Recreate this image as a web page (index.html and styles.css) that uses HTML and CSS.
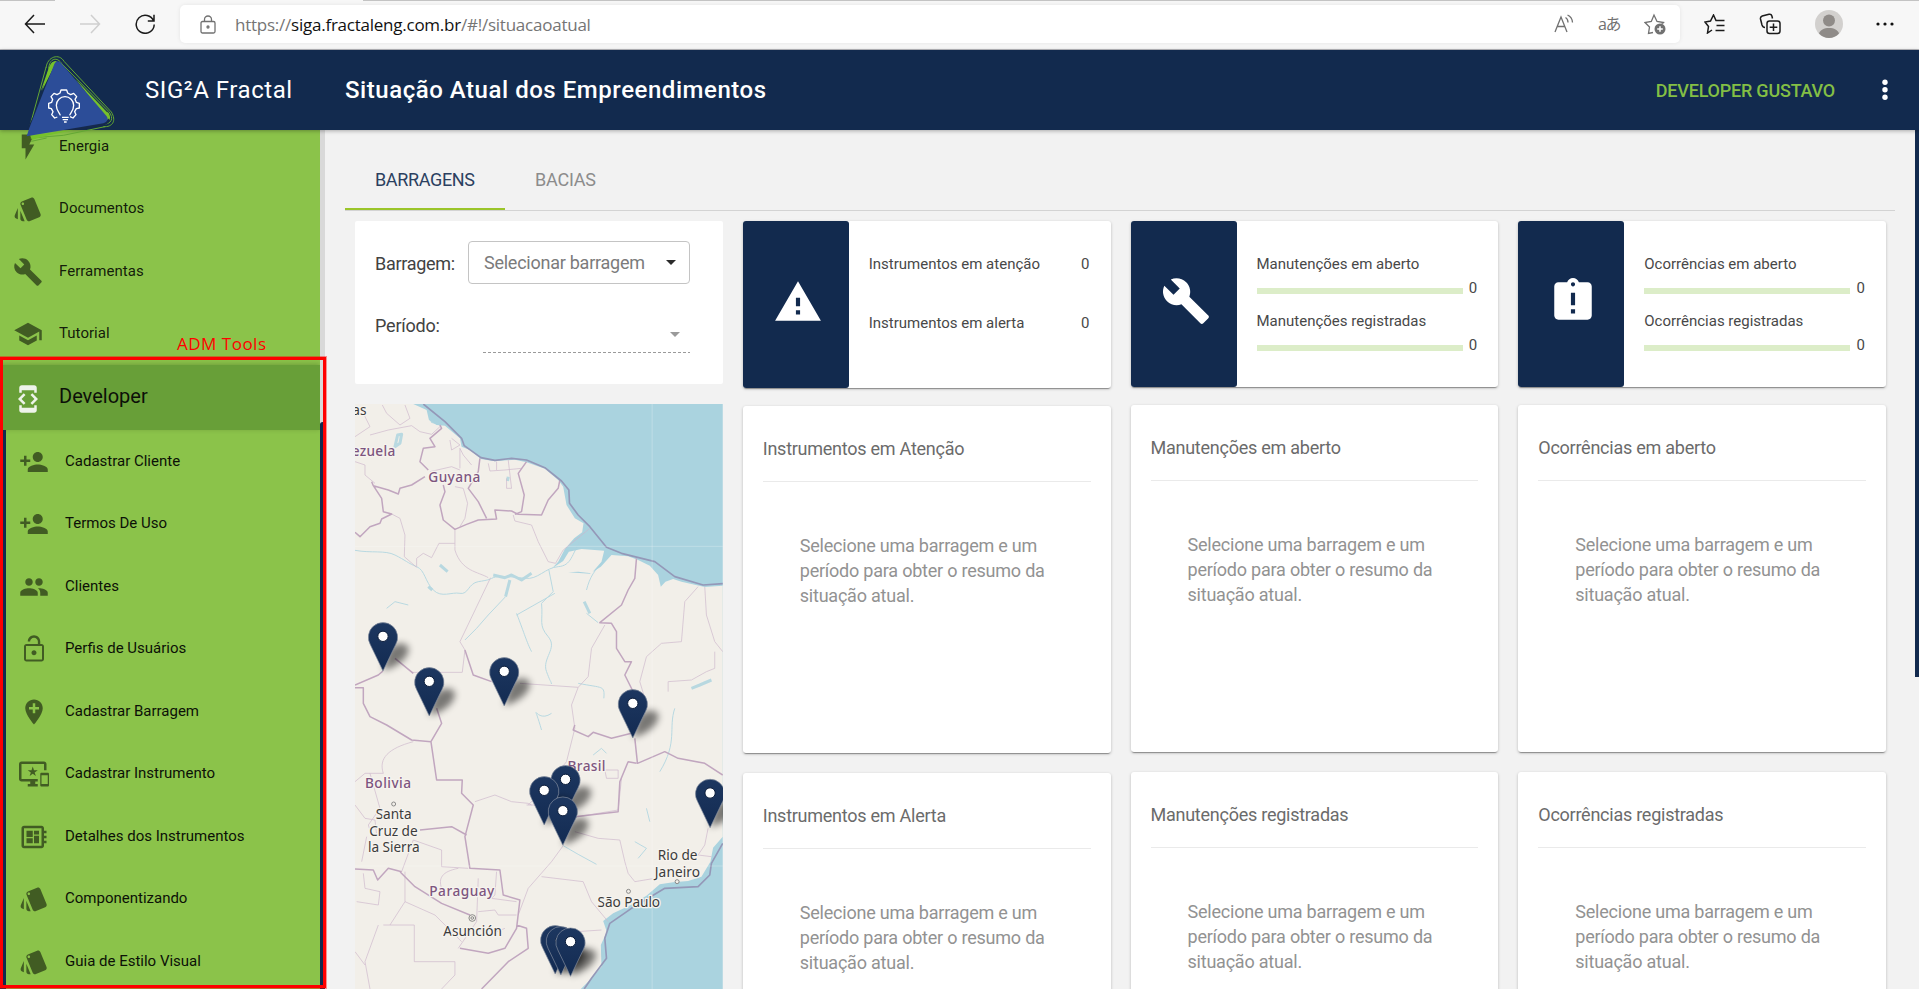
FILE: index.html
```html
<!DOCTYPE html>
<html lang="pt-BR">
<head>
<meta charset="utf-8">
<title>SIG²A Fractal</title>
<link rel="stylesheet" href="styles.css">
</head>
<body>
<svg class="defs" width="0" height="0" aria-hidden="true">
  <symbol id="i-flash" viewBox="0 0 24 24"><path d="M7 2v11h3v9l7-12h-4l4-8z"/></symbol>
  <symbol id="i-style" viewBox="0 0 24 24"><path d="M2.53 19.65l1.34.56v-9.03l-2.43 5.86c-.41 1.02.08 2.19 1.09 2.61zm19.5-3.7L17.07 3.98c-.31-.75-1.04-1.21-1.81-1.23-.26 0-.53.04-.79.15L7.1 5.95c-.75.31-1.21 1.03-1.23 1.8-.01.27.04.54.15.8l4.96 11.97c.31.76 1.05 1.22 1.83 1.23.26 0 .52-.05.77-.15l7.36-3.05c1.02-.42 1.51-1.59 1.09-2.6zM7.88 8.75c-.55 0-1-.45-1-1s.45-1 1-1 1 .45 1 1-.45 1-1 1zm-2 11c0 1.1.9 2 2 2h1.45l-3.45-8.34v6.34z"/></symbol>
  <symbol id="i-build" viewBox="0 0 24 24"><path d="M22.7 19l-9.1-9.1c.9-2.3.4-5-1.5-6.9-2-2-5-2.4-7.4-1.3L9 6 6 9 1.6 4.7C.4 7.1.9 10.1 2.9 12.1c1.9 1.9 4.6 2.4 6.9 1.5l9.1 9.1c.4.4 1 .4 1.4 0l2.3-2.3c.5-.4.5-1.1.1-1.4z"/></symbol>
  <symbol id="i-school" viewBox="0 0 24 24"><path d="M5 13.18v4L12 21l7-3.82v-4L12 17l-7-3.82zM12 3L1 9l11 6 9-4.91V17h2V9L12 3z"/></symbol>
  <symbol id="i-dev" viewBox="0 0 24 24"><path d="M7 5h10v2h2V3c0-1.1-.9-1.99-2-1.99L7 1c-1.1 0-2 .9-2 2v4h2V5zm8.41 11.59L20 12l-4.59-4.59L14 8.83 17.17 12 14 15.17l1.41 1.42zM10 15.17L6.83 12 10 8.83 8.59 7.41 4 12l4.59 4.59L10 15.17zM17 19H7v-2H5v4c0 1.1.9 2 2 2h10c1.1 0 2-.9 2-2v-4h-2v2z"/></symbol>
  <symbol id="i-person-add" viewBox="0 0 24 24"><path d="M15 12c2.21 0 4-1.79 4-4s-1.79-4-4-4-4 1.79-4 4 1.79 4 4 4zm-9-2V7H4v3H1v2h3v3h2v-3h3v-2H6zm9 4c-2.67 0-8 1.34-8 4v2h16v-2c0-2.66-5.33-4-8-4z"/></symbol>
  <symbol id="i-people" viewBox="0 0 24 24"><path d="M16 11c1.66 0 2.99-1.34 2.99-3S17.66 5 16 5c-1.66 0-3 1.34-3 3s1.34 3 3 3zm-8 0c1.66 0 2.99-1.34 2.99-3S9.66 5 8 5C6.34 5 5 6.34 5 8s1.34 3 3 3zm0 2c-2.33 0-7 1.17-7 3.5V19h14v-2.5c0-2.33-4.67-3.5-7-3.5zm8 0c-.29 0-.62.02-.97.05 1.16.84 1.97 1.97 1.97 3.45V19h6v-2.5c0-2.33-4.67-3.5-7-3.5z"/></symbol>
  <symbol id="i-lock-open" viewBox="0 0 24 24"><path d="M12 17c1.1 0 2-.9 2-2s-.9-2-2-2-2 .9-2 2 .9 2 2 2zm6-9h-1V6c0-2.76-2.24-5-5-5S7 3.24 7 6h1.9c0-1.71 1.39-3.1 3.1-3.1 1.71 0 3.1 1.39 3.1 3.1v2H6c-1.1 0-2 .9-2 2v10c0 1.1.9 2 2 2h12c1.1 0 2-.9 2-2V10c0-1.1-.9-2-2-2zm.4 12.4H5.6V9.6h12.8v10.8z"/></symbol>
  <symbol id="i-add-location" viewBox="0 0 24 24"><path d="M12 2C8.14 2 5 5.14 5 9c0 5.25 7 13 7 13s7-7.75 7-13c0-3.86-3.14-7-7-7zm4 8h-3v3h-2v-3H8V8h3V5h2v3h3v2z"/></symbol>
  <symbol id="i-devices" viewBox="0 0 24 24"><path d="M23 11.01L18 11c-.55 0-1 .45-1 1v9c0 .55.45 1 1 1h5c.55 0 1-.45 1-1v-9c0-.55-.45-.99-1-.99zM23 20h-5v-7h5v7zM20 2H2C.89 2 0 2.89 0 4v12c0 1.1.89 2 2 2h7v2H7v2h8v-2h-2v-2h2v-2H2V4h18v5h2V4c0-1.11-.9-2-2-2zm-8.03 7L11 6l-.97 3H7l2.47 1.76-.94 2.91 2.47-1.8 2.47 1.8-.94-2.91L15 9h-3.03z"/></symbol>
  <symbol id="i-board" viewBox="0 0 24 24"><path d="M22 9V7h-2V5c0-1.1-.9-2-2-2H4c-1.1 0-2 .9-2 2v14c0 1.1.9 2 2 2h14c1.1 0 2-.9 2-2v-2h2v-2h-2v-2h2v-2h-2V9h2zm-4 10H4V5h14v14zM6 13h5v4H6zm6-6h4v3h-4zM6 7h5v5H6zm6 4h4v6h-4z"/></symbol>
  <symbol id="i-warning" viewBox="0 0 24 24"><path d="M1 21h22L12 2 1 21zm12-3h-2v-2h2v2zm0-4h-2v-4h2v4z"/></symbol>
  <symbol id="i-late" viewBox="0 0 24 24"><path d="M19 3h-4.18C14.4 1.84 13.3 1 12 1c-1.3 0-2.4.84-2.82 2H5c-1.1 0-2 .9-2 2v14c0 1.1.9 2 2 2h14c1.1 0 2-.9 2-2V5c0-1.1-.9-2-2-2zm-6 15h-2v-2h2v2zm0-4h-2V8h2v6zm-1-9c-.55 0-1-.45-1-1s.45-1 1-1 1 .45 1 1-.45 1-1 1z"/></symbol>
</svg>

<div class="browser">
  <svg class="nav-back" viewBox="0 0 22 20"><path d="M21 10H1.500M10 1L1.500 10l8.500 9"/></svg>
  <svg class="nav-forward" viewBox="0 0 22 20"><path d="M1 10h19.500M12 1l8.500 9L12 19"/></svg>
  <svg class="nav-reload" viewBox="0 0 22 20"><path d="M19.600 7A9 9 0 1 0 20.200 10.500M20 .8V7h-6.200"/></svg>
  <div class="address">
    <svg class="lock" viewBox="0 0 16 19"><rect x="1" y="6.500" width="14" height="11.500" rx="1.500"/><path d="M4.500 6.500V4.500a3.500 3.500 0 0 1 7 0v2"/><circle cx="8" cy="12" r="1"/></svg>
    <div class="url">https://<b>siga.fractaleng.com.br</b>/#!/situacaoatual</div>
    <div class="address-tools">
      <svg width="20" height="20" viewBox="0 0 20 20"><path d="M1 18L7 3l6 15M3.200 12.500h7.600M11.500 3.500c1.500.8 2.500 2.500 2.500 5M13.500 1c3 1.300 4.800 4 5 7.500"/></svg>
      <span class="translate">aあ</span>
      <svg width="22" height="22" viewBox="0 0 22 22"><path d="M9 19.500l-4.500 1 1-6.500L1 9.500l6.300-1L10 2l3 6.500 6.500 1-2 2"/><circle class="solid" cx="16" cy="16" r="5.500"/><path class="plus" d="M16 13.200v5.600M13.200 16h5.600"/></svg>
    </div>
  </div>
  <div class="browser-tools">
    <svg width="22" height="20" viewBox="0 0 22 20"><path d="M8 16l-4.500 3 1-6.500L1 8l5.500-1L9.500 1 12 6.500h8.500M12.500 11.500h8M11.500 16.500h9"/></svg>
    <svg width="22" height="22" viewBox="0 0 22 22"><rect x="8" y="8" width="13" height="12.500" rx="2.500"/><path d="M14.500 10.500v7.500M10.700 14.200h7.600M6 14.500c-2 0-2.500-1-3-2.500L1.500 6c-.3-1.500.3-2.500 1.700-3L10 1.300c1.500-.3 2.500.3 2.900 1.700l.6 2.500"/></svg>
    <svg width="28" height="28" viewBox="0 0 28 28"><circle cx="14" cy="14" r="14" class="av-bg"/><circle cx="14" cy="10.500" r="6" class="av-fg"/><path class="av-fg" d="M4 23.500c1-3.500 5-5.500 10-5.500s9 2 10 5.500A14 14 0 0 1 14 28 14 14 0 0 1 4 23.500z"/></svg>
    <svg width="18" height="4" viewBox="0 0 18 4"><g class="dots"><circle cx="2" cy="2" r="1.600"/><circle cx="9" cy="2" r="1.600"/><circle cx="16" cy="2" r="1.600"/></g></svg>
  </div>
</div>

<header class="topbar">
  <svg class="logo" viewBox="0 0 360 300">
    <path class="logo-line" d="M108 60C112 25 148 15 162 40L304 192C320 218 308 238 280 236"/>
    <path class="logo-line" d="M116 62C118 30 142 25 156 48L296 190C314 212 302 228 284 228M108 58L58 240M62 270L160 262 285 236M64 280L110 270"/>
    <path fill="#76c22b" d="M140 40C124 38 120 50 112 72L92 130zM160 60L296 195C304 210 300 222 288 218zM60 262L190 246 96 266 66 276z"/>
    <path fill="#15294c" d="M150 44L290 190C304 220 298 228 280 232L210 246H62L50 246 60 225z"/>
    <path fill="#76c22b" d="M140 40C126 38 120 52 113 74L96 128zM196 92L294 196C300 208 298 216 290 214z"/>
    <path fill="#2c4d98" d="M133 48C138 36 148 38 154 46L290 205C297 215 290 223 280 226L50 265 58 240z"/>
    <g class="logo-gear"><path d="M142 207l-8 3-9-10 4-9-5-9-8-2v-14l9-3 3-9-5-8 9-10 9 4 9-5 3-9h17l3 9 9 5 9-4 9 10-5 8 4 9 9 3v14l-9 2-5 9 4 9-9 10-9-4M151 202c-2-8-12-13-12-30a26 26 0 0 1 52 0c0 17-10 22-12 30"/><path d="M156 208h20M158 215h16M162 222h8"/></g>
  </svg>
  <div class="brand">SIG²A Fractal</div>
  <h1 class="page-title">Situação Atual dos Empreendimentos</h1>
  <div class="user">DEVELOPER GUSTAVO</div>
  <svg class="more" viewBox="0 0 6 22"><circle cx="3" cy="3.200" r="2.700"/><circle cx="3" cy="10.700" r="2.700"/><circle cx="3" cy="18.200" r="2.700"/></svg>
</header>

<div class="app">
  <nav class="sidebar">
    <div class="menu">
      <a class="item"><svg><use href="#i-flash"/></svg>Energia</a>
      <a class="item"><svg><use href="#i-style"/></svg>Documentos</a>
      <a class="item"><svg><use href="#i-build"/></svg>Ferramentas</a>
      <a class="item"><svg><use href="#i-school"/></svg>Tutorial</a>
      <a class="item item-active"><svg><use href="#i-dev"/></svg>Developer</a>
      <div class="submenu">
        <a class="item"><svg><use href="#i-person-add"/></svg>Cadastrar Cliente</a>
        <a class="item"><svg><use href="#i-person-add"/></svg>Termos De Uso</a>
        <a class="item"><svg><use href="#i-people"/></svg>Clientes</a>
        <a class="item"><svg><use href="#i-lock-open"/></svg>Perfis de Usuários</a>
        <a class="item"><svg><use href="#i-add-location"/></svg>Cadastrar Barragem</a>
        <a class="item"><svg><use href="#i-devices"/></svg>Cadastrar Instrumento</a>
        <a class="item"><svg><use href="#i-board"/></svg>Detalhes dos Instrumentos</a>
        <a class="item"><svg><use href="#i-style"/></svg>Componentizando</a>
        <a class="item"><svg><use href="#i-style"/></svg>Guia de Estilo Visual</a>
      </div>
    </div>
    <div class="side-scroll"><div class="side-thumb"></div></div>
  </nav>

  <main class="content">
    <div class="tabs"><div class="tab tab-active">BARRAGENS</div><div class="tab">BACIAS</div></div>
    <div class="columns">
      <section class="col">
        <div class="filter">
          <label class="f-label">Barragem:</label>
          <div class="select">Selecionar barragem<i class="caret"></i></div>
          <label class="f-label period">Período:</label>
          <div class="select-empty"><i class="caret"></i></div>
        </div>
        <svg class="map" viewBox="30 27 1104 1755" preserveAspectRatio="none">
          <defs>
            <filter id="soft" x="-60%" y="-60%" width="220%" height="220%"><feGaussianBlur stdDeviation="11"/></filter>
            <linearGradient id="pinfill" x1="0" y1="0" x2="0" y2="1"><stop offset="0" stop-color="#1d3760"/><stop offset="1" stop-color="#132b52"/></linearGradient>
            <g id="pin">
              <path d="M0 -2L14 -60C36 -92 84 -88 76 -58C66 -26 26 -8 0 -2z" fill="#000" opacity=".5" filter="url(#soft)"/>
              <path d="M0 0L-38 -79A44 44 0 1 1 38 -79z" fill="url(#pinfill)" stroke="#8790a0" stroke-width="2"/>
              <circle cy="-104" r="15.500" fill="#fff" stroke="#0b1c39" stroke-width="3"/>
            </g>
          </defs>
          <rect x="30" y="27" width="1104" height="1755" fill="#aad3df"/>
          <path fill="#f2efe9" d="M30 27H205L245 45 252 75 275 90 300 92 345 130 350 155 375 165 408 192 450 199 510 194 545 202 600 221 640 255 655 275 665 330 690 370 716 385 712 412 688 430 660 462 640 500 622 520 655 498 672 470 710 462 778 467 770 500 740 535 700 530 670 532 735 536 768 515 800 480 850 484 880 495 915 512 940 540 948 575 962 560 985 552 1010 560 1080 576 1134 572V1325L1105 1358 1097 1400 1070 1445 1030 1458 985 1462 945 1468 905 1502 858 1530 805 1555 775 1578 786 1610 768 1650 770 1715 740 1750 708 1782H30z"/>
          <g class="rivers">
            <path d="M30 466C80 475 120 465 150 480S190 505 215 515 240 560 265 585 320 590 345 595 370 565 400 560 430 555 445 548 500 545 540 550 600 518 640 515 680 480 710 430"/>
            <path class="wide" d="M445 540L480 548 500 540 530 555 560 535M495 555L482 605M150 155L158 120 170 118 165 145zM255 50L262 80 290 88M250 575L262 585M285 510L308 530M718 620L735 655M1040 880L1065 870 1100 855M490 245L488 258"/>
            <path d="M482 605L430 660 395 700 360 735M612 525L625 590 590 625C595 680 580 690 610 725S590 790 605 830 615 850 620 867M515 660L630 595M515 655C540 720 545 740 560 770M725 585C735 545 750 525 775 500M725 655L760 683M125 640L150 620 190 630M700 865C775 880 780 870 777 910M655 1352L700 1378 755 1408M990 940C970 1000 1000 1040 945 1130M620 955C570 990 560 900 590 1005M745 1080L770 1060 785 1075M905 1240L915 1280M870 1340L905 1360 880 1390"/>
          </g>
          <g class="states">
            <path d="M30 125L75 95 60 65 62 40M112 30L125 55 165 90 195 70 180 30M75 120L130 105 200 92 225 110 260 118 285 95M30 200L60 210 60 240 90 265M320 130L345 150 320 165 315 135M345 160L355 180 380 210M255 230L320 215 345 225M345 160V220M430 205L435 228 480 225 530 220M455 200V225M490 195L500 280 485 280 485 250M330 275L355 280 368 325 360 370 345 395M140 357L165 370 180 420 178 485 215 517M215 515V490L235 475 260 488 282 445H330M330 400V465C350 530 400 530 430 548M505 360L510 378 560 390 580 440 610 500 632 505 655 465 735 400M437 548L345 740 360 765M200 832H352L360 765M525 865L700 877M700 877L730 845 740 760 780 690"/>
            <path d="M1080 575L1085 660 1110 740 1134 770M1060 575L1020 620 1010 740 950 745 905 785 885 860 900 910M1110 770L1110 820 1085 830 1040 855 970 860 970 890M700 877L680 930 690 1000M690 1000L665 1100 600 1180 550 1230M30 1160L60 1135 115 1135C100 1090 130 1060 205 1040M75 1135L105 1240 70 1290 75 1305M30 1230L60 1270 90 1275 95 1320M50 1400L65 1325M390 1220L450 1200 500 1220 550 1225 560 1230M545 1230L600 1230 630 1230M780 1125H820V1150H785zM690 1310L760 1330 825 1335 840 1400 850 1435 870 1460 930 1450M590 1445L715 1460 740 1520 790 1580M655 1352L620 1400 550 1480 520 1560M700 1265L820 1245 830 1150M170 1430L205 1335 290 1365 290 1415 370 1420M180 1430V1520L135 1590M115 1590H208V1700H330L330 1740 290 1782M180 1520L270 1560 350 1640M340 1420C290 1430 280 1450 290 1480M100 1590L60 1700 75 1782M30 1670L60 1710M55 1435L60 1480 105 1490 100 1530 35 1520M400 1450L395 1580 340 1660M400 1550L450 1545 460 1560 515 1560M455 1430L450 1500 440 1510 515 1520M400 1600L430 1620 480 1600M695 1610L770 1605M1090 1300L1080 1350 1060 1380 1100 1385"/>
          </g>
          <g class="borders">
            <path d="M285 90L290 100 255 130 270 155 235 160 225 200 250 225M240 245L200 270 165 280 160 297 130 285 85 272 80 260M85 272L110 310 115 350 140 357 110 372 105 385 75 395 45 425 30 412M295 270L300 290 285 330 295 375 330 403 365 388 400 375 455 372 450 345 500 348 520 358 590 360 610 315 640 280 645 255M405 190L400 230 370 280 400 320 425 370M545 200L520 235 538 300 530 350 510 358M875 490L870 550 850 585 830 630 765 683 800 685 815 710 815 760 840 800 860 800 840 840 870 900M360 765L385 840 440 860M30 878H55V925L75 965 125 990 200 1035 258 1040 275 1155H352L350 1195 385 1230 360 1325 375 1420 465 1425 475 1500 525 1515 515 1600 480 1660 430 1675 345 1660M170 1430L130 1420 98 1455 85 1425 30 1422M165 1430L210 1475 290 1525 375 1560M225 1305L320 1295 365 1320M258 1040L290 985 275 940M515 1590L545 1600 550 1660 490 1700 410 1782M690 990L685 1005 730 1025 745 1012 800 1030 860 1015M870 1030L878 1105 960 1070 1000 1090 1080 1105 1134 1140M690 1265L820 1250 825 1160 850 1100 875 1105M30 870L100 840 114 828M150 790L205 835"/>
          </g>
          <path class="maritime" d="M235 27L300 80 350 130 358 152 408 188 450 196 500 190 545 195 600 218 650 258 672 285 674 325 700 360 735 395 785 457 830 475 930 500 990 545 1075 570 1134 566M1134 1345L1100 1405 1095 1440 1060 1475 960 1480 860 1540 795 1585 780 1630 785 1690 740 1750 718 1782"/>
          <path d="M922 27V1782M30 454H1134M30 1413H1134" fill="none" stroke="#fff" stroke-opacity=".25" stroke-width="3"/>
          <g class="country">
            <text x="20" y="183" textLength="131">ezuela</text>
            <text x="250" y="262" textLength="156">Guyana</text>
            <text x="60" y="1178" textLength="138">Bolivia</text>
            <text x="668" y="1127" textLength="114">Brasil</text>
            <text x="253" y="1504" textLength="195">Paraguay</text>
          </g>
          <g class="city">
            <text x="22" y="59">as</text>
            <text x="92" y="1273" textLength="108">Santa</text>
            <text x="73" y="1322" textLength="145">Cruz de</text>
            <text x="69" y="1371" textLength="155">la Sierra</text>
            <text x="939" y="1395" textLength="119">Rio de</text>
            <text x="930" y="1445" textLength="136">Janeiro</text>
            <text x="758" y="1535" textLength="188">São Paulo</text>
            <text x="295" y="1624" textLength="176">Asunción</text>
          </g>
          <g fill="#f2efe9" stroke="#777" stroke-width="2.500"><circle cx="146" cy="1227" r="6"/><circle cx="851" cy="1489" r="6"/><circle cx="997" cy="1460" r="6"/><circle cx="382" cy="1569" r="10"/><circle cx="382" cy="1569" r="4"/></g>
          <use href="#pin" x="114" y="828"/><use href="#pin" x="478" y="933"/><use href="#pin" x="253" y="963"/>
          <use href="#pin" x="864" y="1029"/><use href="#pin" x="662" y="1257"/><use href="#pin" x="598" y="1290"/>
          <use href="#pin" x="1096" y="1298"/><use href="#pin" x="654" y="1351"/>
          <use href="#pin" x="631" y="1737"/><use href="#pin" x="648" y="1740"/><use href="#pin" x="677" y="1744"/>
        </svg>
      </section>

      <section class="col col-first">
        <div class="stat">
          <div class="stat-icon"><svg><use href="#i-warning"/></svg></div>
          <div class="stat-body plain">
            <div class="row"><span>Instrumentos em atenção</span><span>0</span></div>
            <div class="row"><span>Instrumentos em alerta</span><span>0</span></div>
          </div>
        </div>
        <div class="panel"><h2>Instrumentos em Atenção</h2><p>Selecione uma barragem e um período para obter o resumo da situação atual.</p></div>
        <div class="panel"><h2>Instrumentos em Alerta</h2><p>Selecione uma barragem e um período para obter o resumo da situação atual.</p></div>
      </section>

      <section class="col">
        <div class="stat">
          <div class="stat-icon"><svg><use href="#i-build"/></svg></div>
          <div class="stat-body">
            <div class="name">Manutenções em aberto</div>
            <div class="meter"><i></i><span>0</span></div>
            <div class="name">Manutenções registradas</div>
            <div class="meter"><i></i><span>0</span></div>
          </div>
        </div>
        <div class="panel"><h2>Manutenções em aberto</h2><p>Selecione uma barragem e um período para obter o resumo da situação atual.</p></div>
        <div class="panel"><h2>Manutenções registradas</h2><p>Selecione uma barragem e um período para obter o resumo da situação atual.</p></div>
      </section>

      <section class="col">
        <div class="stat">
          <div class="stat-icon"><svg><use href="#i-late"/></svg></div>
          <div class="stat-body">
            <div class="name">Ocorrências em aberto</div>
            <div class="meter"><i></i><span>0</span></div>
            <div class="name">Ocorrências registradas</div>
            <div class="meter"><i></i><span>0</span></div>
          </div>
        </div>
        <div class="panel"><h2>Ocorrências em aberto</h2><p>Selecione uma barragem e um período para obter o resumo da situação atual.</p></div>
        <div class="panel"><h2>Ocorrências registradas</h2><p>Selecione uma barragem e um período para obter o resumo da situação atual.</p></div>
      </section>
    </div>
  </main>
  <div class="page-scroll"><div class="page-thumb"></div></div>
</div>

<div class="note-frame"></div>
<div class="note-label">ADM Tools</div>
</body>
</html>
```
FILE: styles.css
```css
* { box-sizing: border-box; }

body {
  margin: 0;
  width: 1919px;
  height: 989px;
  overflow: hidden;
  position: relative;
  display: flex;
  flex-direction: column;
  font-family: Roboto, "Liberation Sans", sans-serif;
  background: #f2f2f2;
}

.defs { position: absolute; }

/* Browser toolbar */
.browser {
  flex: none;
  height: 50px;
  display: flex;
  align-items: center;
  padding: 0 25px 1px 24px;
  background: linear-gradient(90deg, #c3c3c3 55px, #f7f7f7 55px 363px, #c3c3c3 363px) top / 100% 1px no-repeat, #f7f7f7;
  border-bottom: 1px solid #b9b9bd;
}
.browser svg { fill: none; stroke: #1b1b1b; stroke-width: 1.5; flex: none; }
.nav-back, .nav-forward, .nav-reload { width: 22px; height: 20px; }
.browser .nav-forward { margin-left: 33px; stroke: #cfcfcf; }
.nav-reload { margin-left: 33px; }
.address {
  width: 1500px;
  height: 38px;
  margin-left: 24px;
  padding: 0 14px 0 20px;
  display: flex;
  align-items: center;
  border-radius: 5px;
  background: #fff;
  box-shadow: 0 0 4px rgba(0, 0, 0, .08);
}
.address svg { stroke: #717171; stroke-width: 1.3; }
.lock { width: 16px; height: 19px; }
.url {
  margin-left: 19px;
  font: 17px "Open Sans", "Noto Sans", sans-serif;
  letter-spacing: -.24px;
  color: #757575;
  white-space: nowrap;
}
.url b { font-weight: 400; color: #111; }
.address-tools { margin-left: auto; display: flex; align-items: center; gap: 24px; color: #717171; }
.address-tools .solid { fill: #717171; stroke: none; }
.address-tools .plus { stroke: #fff; stroke-width: 1.5; }
.translate { font: 16px/20px "Open Sans", "Noto Sans CJK JP", sans-serif; width: 22px; letter-spacing: -1.5px; white-space: nowrap; }
.browser-tools { margin-left: auto; display: flex; align-items: center; gap: 33.5px; }
.browser .av-bg { fill: #d2d0ce; stroke: none; }
.browser .av-fg { fill: #8f8b88; stroke: none; }
.browser .dots { fill: #111; stroke: none; }

/* Header */
.topbar {
  flex: none;
  height: 80px;
  display: flex;
  align-items: center;
  background: #122a4e;
  color: #fff;
  position: relative;
  z-index: 2;
  box-shadow: 0 1px 4px rgba(0, 0, 0, .3);
}
.logo { position: absolute; left: 10px; top: -2px; width: 120px; height: 100px; }
.logo-line { fill: none; stroke: #63a834; stroke-width: 3; }
.logo-gear { fill: none; stroke: #fff; stroke-width: 4; stroke-linejoin: round; }
.brand { margin-left: 145px; width: 200px; font-size: 24px; letter-spacing: .55px; padding-bottom: 1px; }
.page-title { margin: 0; padding-bottom: 1px; font-size: 24px; font-weight: 500; letter-spacing: .54px; }
.user { margin-left: auto; font-size: 18px; font-weight: 500; color: #83bf45; letter-spacing: -.22px; padding-top: 1px; }
.more { width: 6px; height: 22px; margin: 0 31px 0 47px; fill: #fff; }

.app { flex: 1; min-height: 0; display: flex; overflow: hidden; }

/* Sidebar */
.sidebar { width: 325px; display: flex; overflow: hidden; background: #8bc34a; }
.menu { flex: 1; margin-top: -15px; }
.item {
  height: 62.5px;
  display: flex;
  align-items: center;
  gap: 16px;
  padding: 0 0 1px 13px;
  font-size: 15px;
  letter-spacing: .04px;
  color: rgba(0, 0, 0, .87);
  line-height: 20px;
}
.item svg { width: 30px; height: 30px; fill: #415c23; position: relative; top: 1px; }
.item-active {
  height: 65px;
  padding-bottom: 4px;
  font-size: 20px;
  letter-spacing: 0;
  color: #0c0f08;
  background: #689f38;
  box-shadow: 0 -1px 5px rgba(0, 0, 0, .2);
}
.item-active svg { fill: #eef3ea; top: 3px; }
.submenu { border-left: 6px solid #122a4e; }
.submenu .item { color: #0c1107; letter-spacing: 0; }
.side-scroll { width: 5px; background: #d9d9d9; padding-top: 292px; }
.side-thumb { height: 567px; background: #122a4e; border-radius: 3px 3px 0 0; }

/* Content */
.content { flex: 1; min-width: 0; padding: 30px 20px 0; }
.tabs { height: 51px; display: flex; border-bottom: 1px solid #d3d3d3; }
.tab {
  width: 160px;
  height: 50px;
  display: flex;
  align-items: center;
  padding: 0 30px 12px;
  font-size: 18px;
  letter-spacing: -.35px;
  color: #8c8c8c;
}
.tab:last-child { letter-spacing: -.2px; }
.tab-active { color: #2b4060; border-bottom: 2px solid #9bc52a; padding-bottom: 10px; }
.columns {
  display: grid;
  grid-template-columns: repeat(4, 367.75px);
  column-gap: 20px;
  padding: 10px 0 0 10px;
  align-items: start;
}
.filter {
  height: 163px;
  display: grid;
  grid-template-columns: 93px 222px;
  grid-template-rows: 43px auto;
  row-gap: 9px;
  padding: 20px 0 0 20px;
  background: #fff;
  border-radius: 2px;
  font-size: 18px;
  color: #424242;
}
.f-label { line-height: 46px; letter-spacing: -.3px; }
.f-label.period { line-height: 66px; letter-spacing: -.2px; }
.select {
  display: flex;
  align-items: center;
  justify-content: space-between;
  padding: 0 13px 0 15px;
  border: 1px solid #c4c4c4;
  border-radius: 4px;
  color: #7b7b7b;
  letter-spacing: -.25px;
}
.caret { border: 5px solid transparent; border-top-color: #2b2b2b; border-bottom: 0; }
.select-empty { height: 60px; margin-left: 15px; display: flex; justify-content: flex-end; align-items: center; padding: 23px 10px 0 0; background: repeating-linear-gradient(90deg, #9a9a9a 0 3px, transparent 3px 5px) bottom / 100% 1px no-repeat; }
.select-empty .caret { border-top-color: #9a9a9a; }

/* Map */
.map { display: block; width: 367.75px; height: 585px; margin-top: 20px; }
.rivers { fill: none; stroke: #aad3df; stroke-width: 3; stroke-linejoin: round; opacity: .8; }
.rivers .wide { stroke-width: 9; }
.states { fill: none; stroke: #cdb7cb; stroke-width: 2.5; stroke-linejoin: round; opacity: .8; }
.borders { fill: none; stroke: #c1a6bf; stroke-width: 4.5; stroke-linejoin: round; }
.maritime { fill: none; stroke: #9498b8; stroke-width: 5; stroke-linejoin: round; }
.country, .city { font-family: "Noto Sans", sans-serif; stroke: #f6f3ee; stroke-width: 8; paint-order: stroke; stroke-linejoin: round; }
.country { font-size: 41px; font-weight: 500; fill: #7d557f; }
.city { font-size: 41px; fill: #3c3c3c; }

/* Cards */
.stat {
  height: 166px;
  display: flex;
  border-radius: 3px;
  background: #fff;
  box-shadow: 0 1px 3px rgba(0, 0, 0, .25), 0 2px 1px -1px rgba(0, 0, 0, .3);
}
.stat-icon {
  width: 106px;
  display: flex;
  align-items: center;
  justify-content: center;
  padding: 0 0 6px 4px;
  background: #122a4e;
  border-radius: 3px;
}
.stat-icon svg { width: 50px; height: 50px; fill: #fff; }
.stat-body { flex: 1; padding: 33px 21px 0 20px; font-size: 15px; line-height: 20px; color: #484848; }
.row { display: flex; justify-content: space-between; margin-bottom: 39px; }
.meter { display: flex; align-items: center; justify-content: space-between; height: 20px; margin: 4px 0 13px; }
.meter i { width: 206px; height: 6px; background: #dcedc8; position: relative; top: 3px; }
.panel {
  height: 347px;
  margin-top: 20px;
  padding: 28px 20px 0;
  border-radius: 3px;
  background: #fff;
  box-shadow: 0 1px 3px rgba(0, 0, 0, .25), 0 2px 1px -1px rgba(0, 0, 0, .3);
}
.stat + .panel { margin-top: 18px; }
.col-first .stat { height: 167px; }
.panel h2 {
  margin: 0;
  height: 48px;
  font-size: 18px;
  line-height: 30px;
  font-weight: 400;
  letter-spacing: -.25px;
  color: #6b6b6b;
  border-bottom: 1px solid #eaeaea;
}
.panel p { margin: 51px 30px 0 37px; font-size: 18px; line-height: 25px; color: #929292; letter-spacing: -.22px; }

.page-scroll { width: 4px; background: #f2f2f2; }
.page-thumb { height: 547px; background: #122a4e; }

/* Annotation over the sidebar */
.note-frame { position: absolute; z-index: 3; left: 0; top: 357px; width: 326px; height: 631px; border: 3px solid #f00; box-shadow: 0 0 0 1px rgba(255, 0, 0, .4); }
.note-label {
  position: absolute;
  z-index: 3;
  left: 177px;
  top: 332px;
  font: 17px/24px "Open Sans", sans-serif;
  letter-spacing: .5px;
  color: #f00;
}
```
